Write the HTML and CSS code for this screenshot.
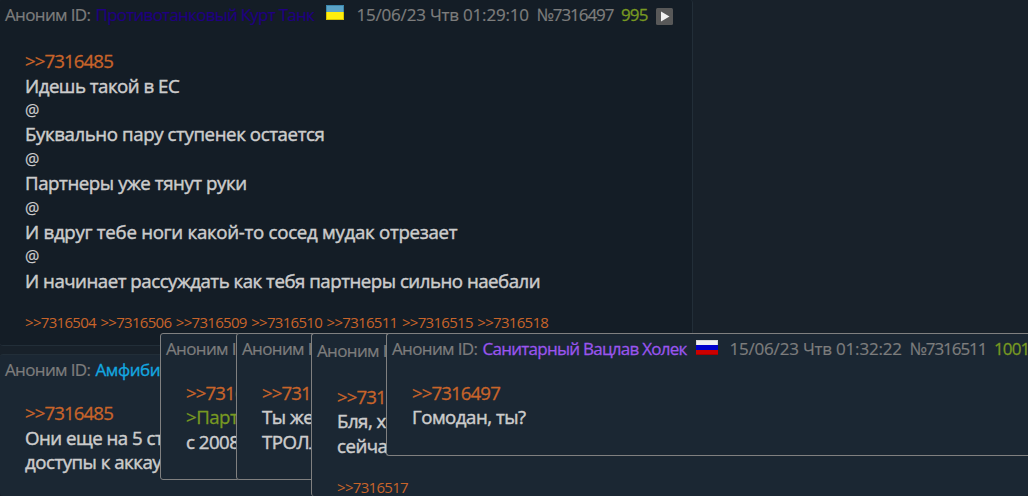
FILE: index.html
```html
<!DOCTYPE html>
<html lang="ru">
<head>
  <meta charset="UTF-8" />
  <title>Тред</title>
  <link rel="stylesheet" href="styles.css">
</head>
<body>
  <div class="thread">
    <div class="post post-main">
      <div class="post-head">
        <span class="anon">Аноним ID:</span>
        <span class="name name-navy">Противотанковый Курт Танк</span>
        <svg class="flag flag-ua" width="18" height="15" viewBox="0 0 18 15">
          <rect width="18" height="15" fill="#3b87ad"/>
          <rect x="1" y="1" width="16" height="6" fill="#5ba3c7"/>
          <rect y="7" width="18" height="8" fill="#d6c400"/>
          <rect x="1" y="7" width="16" height="7" fill="#ffee0c"/>
        </svg>
        <span class="date">15/06/23 Чтв 01:29:10</span>
        <span class="num">№7316497</span>
        <span class="count">995</span>
        <svg class="play" width="17" height="17" viewBox="0 0 17 17">
          <rect width="17" height="17" rx="1.5" fill="#585858"/>
          <path d="M5 3.5v10l8.5-5z" fill="#f0f0f0"/>
        </svg>
      </div>
      <div class="post-text">
        <div><a class="link">&gt;&gt;7316485</a></div>
        <div class="l1">Идешь такой в ЕС</div>
        <div class="at">@</div>
        <div class="l2">Буквально пару ступенек остается</div>
        <div class="at">@</div>
        <div class="l3">Партнеры уже тянут руки</div>
        <div class="at">@</div>
        <div class="l4">И вдруг тебе ноги какой-то сосед мудак отрезает</div>
        <div class="at">@</div>
        <div class="l5">И начинает рассуждать как тебя партнеры сильно наебали</div>
      </div>
      <div class="refs">
        <a>&gt;&gt;7316504</a><a>&gt;&gt;7316506</a><a>&gt;&gt;7316509</a><a>&gt;&gt;7316510</a><a>&gt;&gt;7316511</a><a>&gt;&gt;7316515</a><a>&gt;&gt;7316518</a>
      </div>
    </div>

    <div class="post post-reply">
      <div class="post-head">
        <span class="anon">Аноним ID:</span>
        <span class="name name-blue">Амфибий</span>
      </div>
      <div class="post-text">
        <div><a class="link">&gt;&gt;7316485</a></div>
        <div>Они еще на 5 сту</div>
        <div>доступы к аккау</div>
      </div>
    </div>
  </div>

  <div class="preview preview-1">
    <div class="post-head"><span class="anon">Аноним ID:</span></div>
    <div class="post-text">
      <div><a class="link">&gt;&gt;7316497</a></div>
      <div class="quote">&gt;Партнеры</div>
      <div>с 2008</div>
    </div>
  </div>

  <div class="preview preview-2">
    <div class="post-head"><span class="anon">Аноним ID:</span></div>
    <div class="post-text">
      <div><a class="link">&gt;&gt;7316497</a></div>
      <div>Ты же</div>
      <div>ТРОЛЛ</div>
    </div>
  </div>

  <div class="preview preview-3">
    <div class="post-head"><span class="anon">Аноним ID:</span></div>
    <div class="post-text">
      <div><a class="link">&gt;&gt;7316497</a></div>
      <div>Бля, х</div>
      <div>сейчас</div>
    </div>
    <div class="refs"><a>&gt;&gt;7316517</a></div>
  </div>

  <div class="preview preview-4">
    <div class="post-head">
      <span class="anon">Аноним ID:</span>
      <span class="name name-violet">Санитарный Вацлав Холек</span>
      <svg class="flag flag-ru" width="22" height="15" viewBox="0 0 22 15">
        <rect width="22" height="5" fill="#d8d8d8"/>
        <rect x="1" y="1" width="20" height="4" fill="#f0f0f0"/>
        <rect y="5" width="22" height="5" fill="#0000cc"/>
        <rect y="10" width="22" height="5" fill="#cc0000"/>
        <rect y="14" width="22" height="1" fill="#a80000"/>
      </svg>
      <span class="date">15/06/23 Чтв 01:32:22</span>
      <span class="num">№7316511</span>
      <span class="count">1001</span>
    </div>
    <div class="post-text">
      <div><a class="link">&gt;&gt;7316497</a></div>
      <div>Гомодан, ты?</div>
    </div>
  </div>
</body>
</html>
```
FILE: styles.css
```css
html {
  overflow: hidden;
}
body {
  margin: 0;
  height: 496px;
  overflow: hidden;
  position: relative;
  background: #18212a;
  color: #cccccc;
  font-family: "Open Sans", "Noto Sans", sans-serif;
  font-size: 18.67px;
}
.thread {
  display: flex;
  flex-direction: column;
  gap: 8px;
}
.post {
  box-sizing: border-box;
  border: 1px solid #222e38;
  border-left: none;
  border-radius: 3px;
}
.post-main {
  width: 693px;
  height: 346px;
  background: #141d26;
  border-top: none;
}
.post-reply {
  width: 693px;
  height: 142px;
  background: #1b2733;
  border-bottom: none;
}
.post-head {
  display: flex;
  align-items: center;
  height: 30px;
  padding-left: 5px;
  font-size: 17px;
  line-height: 30px;
  color: #7d7d7d;
  -webkit-text-stroke: 0.2px;
  white-space: nowrap;
}
.post-head > * {
  flex: none;
}
.anon {
  width: 90.5px;
  letter-spacing: -0.65px;
}
.name {
  letter-spacing: -0.74px;
}
.name-navy {
  width: 230.5px;
  color: #1f0080;
}
.name-blue {
  color: #13a8e0;
  letter-spacing: -0.4px;
  -webkit-text-stroke: 0.3px;
}
.name-violet {
  width: 213.5px;
  color: #9a55ee;
  -webkit-text-stroke: 0.3px;
}
.flag {
  margin-bottom: 5px;
}
.flag-ua {
  margin-right: 12.5px;
}
.flag-ru {
  margin-right: 11.5px;
  margin-bottom: 3px;
}
.date {
  width: 180px;
  letter-spacing: -0.2px;
}
.num {
  width: 84.5px;
  letter-spacing: -1.05px;
}
.count {
  width: 34.5px;
  color: #789922;
  letter-spacing: -0.9px;
  -webkit-text-stroke: 0.3px;
}
.play {
  margin-top: 3px;
}
.post-text {
  padding: 19.2px 0 0 25px;
  line-height: 24.4px;
  letter-spacing: -0.5px;
  -webkit-text-stroke: 0.45px;
  white-space: nowrap;
}
.post-reply .post-text {
  padding-top: 16.4px;
}
.link {
  color: #c8642a;
  letter-spacing: -0.9px;
  -webkit-text-stroke: 0.3px;
}
.quote {
  color: #789922;
  -webkit-text-stroke: 0.3px;
}
.at {
  font-size: 16px;
  -webkit-text-stroke: 0.2px;
}
.l2 {
  letter-spacing: -0.4px;
}
.l3 {
  letter-spacing: -0.43px;
}
.l4 {
  letter-spacing: -0.28px;
}
.l5 {
  letter-spacing: -0.48px;
}
.refs {
  display: flex;
  gap: 4.5px;
  padding: 16.8px 0 0 25px;
  font-size: 15px;
  line-height: 24px;
  letter-spacing: -0.7px;
  color: #c8642a;
}
.preview {
  position: absolute;
  top: 333px;
  box-sizing: border-box;
  overflow: hidden;
  background: #1b2733;
  border: 1px solid #808080;
  border-radius: 3px;
}
.preview .post-text {
  padding-top: 17px;
}
/* each preview is covered on the right by the next one */
.preview-1 {
  left: 160px;
  width: 80px;
  height: 147px;
}
.preview-2 {
  left: 236px;
  width: 80px;
  height: 147px;
}
.preview-3 {
  left: 311px;
  right: 0;
  height: 163px;
  padding-top: 2px;
  border-right: none;
  border-bottom: none;
}
.preview-3 .post-text {
  padding-top: 19px;
}
.preview-4 {
  left: 386px;
  right: 0;
  height: 123px;
  border-right: none;
  border-radius: 3px 0 0 3px;
}
```
